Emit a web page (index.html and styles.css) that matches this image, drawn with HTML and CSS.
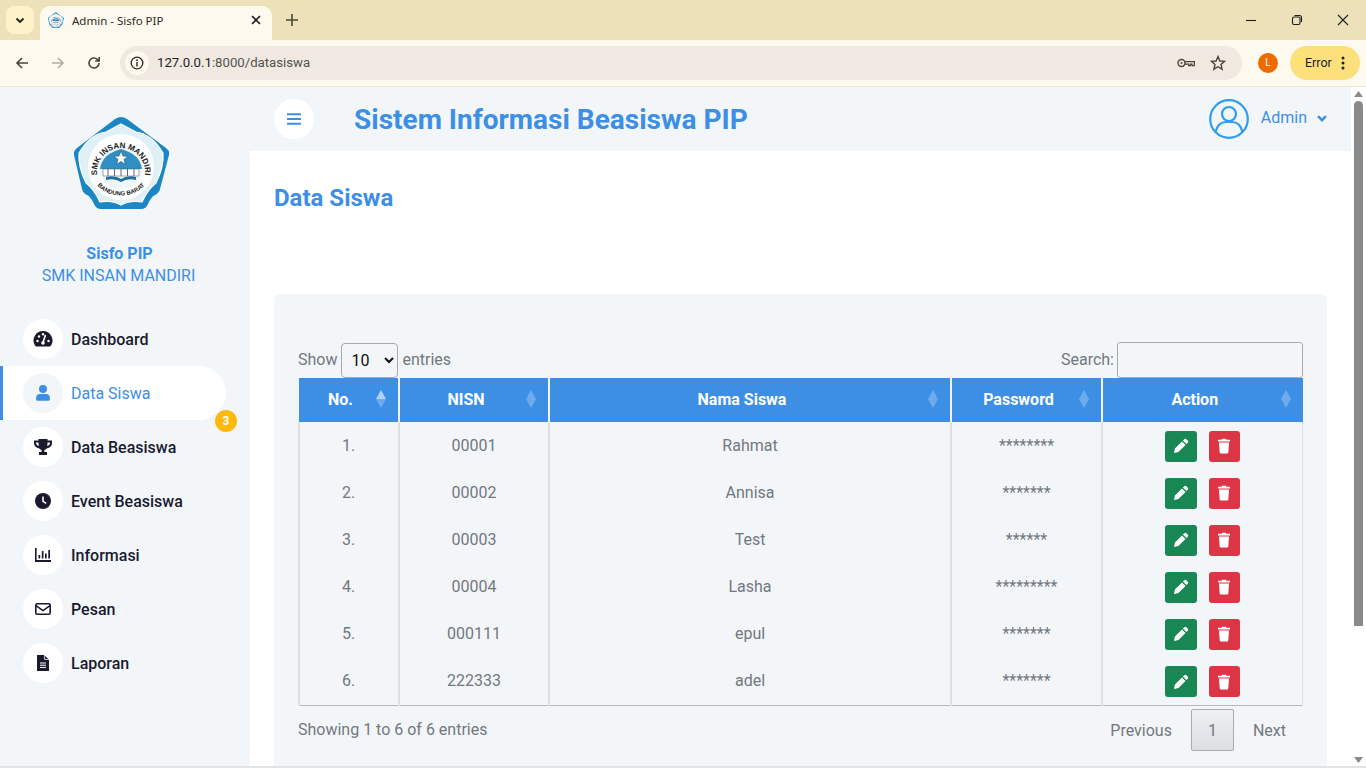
FILE: index.html
```html
<!DOCTYPE html>
<html lang="en">
<head>
    <meta charset="UTF-8">
    <title>Admin - Sisfo PIP</title>
    <link rel="stylesheet" href="styles.css">
</head>
<body>
    <svg class="defs" width="0" height="0">
        <defs>
            <symbol id="logo" viewBox="0 0 96 92">
                <path d="M47 0 Q50 0 53 2 L92 31 Q96 34 95 38 L86 72 Q85 76 81 78 Q77 80 74 87 Q72 92 67 92 H27 Q22 92 20 87 Q17 80 13 78 Q9 76 8 72 L0 38 Q-1 34 3 31 L41 2 Q44 0 47 0 Z" fill="#1b86c4"/>
                <path d="M47 7 L62 15 Q78 17 89 36 Q90 50 82 66 Q74 72 68 85 Q56 83 47 88 Q38 83 26 85 Q20 72 12 66 Q4 50 5 36 Q16 17 32 15 Z" fill="#dff0f6" stroke="#fff" stroke-width="1.2"/>
                <circle cx="47" cy="50" r="33" fill="#fff"/>
                <circle cx="47" cy="50" r="22" fill="#eef6f9"/>
                <path d="M26 52 Q28 37 47 32 Q66 37 68 52 Z" fill="#2f8fc4"/>
                <path d="M47 34 l2 5 5 .2 -4 3.2 1.4 5 -4.4 -2.9 -4.4 2.9 1.4 -5 -4 -3.2 5 -.2 Z" fill="#f4fafc" stroke="#27506e" stroke-width=".6"/>
                <path d="M29 52 h36 v7 h-36 Z" fill="#fff" stroke="#555" stroke-width=".5"/>
                <path d="M34 52 v7 M40.500 52 v7 M47 52 v7 M53.500 52 v7 M60 52 v7" stroke="#555" stroke-width=".9"/>
                <path d="M32 60 Q41 58 47 62 Q53 58 62 60 L62 63 Q53 61 47 65 Q41 61 32 63 Z" fill="#1f6f9f"/>
                <path id="arc-top" d="M23.8 61.200 A24 24 0 1 1 70.200 61.200" fill="none"/>
                <path id="arc-bot" d="M22 66 A27 20 0 0 0 72 66" fill="none"/>
                <text class="logo-text" font-size="8"><textPath href="#arc-top" startOffset="50%" text-anchor="middle">SMK INSAN MANDIRI</textPath></text>
                <text class="logo-text" font-size="6"><textPath href="#arc-bot" startOffset="50%" text-anchor="middle">BANDUNG BARAT</textPath></text>
            </symbol>
            <symbol id="pencil" viewBox="0 0 16 16">
                <path d="M11.3 1.2 a1.4 1.4 0 0 1 2 0 l1.5 1.5 a1.4 1.4 0 0 1 0 2 l-1.4 1.4 -3.5 -3.5 Z M9 3.5 l3.5 3.5 L5.4 14.1 1 15 l.9 -4.4 Z" fill="currentColor"/>
            </symbol>
            <symbol id="trash" viewBox="0 0 14 16">
                <path d="M1 1.8 h3.6 l.5 -1 h3.8 l.5 1 h3.6 v1.8 h-12 Z M2 4.6 h10 l-.7 10 a1.2 1.2 0 0 1 -1.2 1 h-6.2 a1.2 1.2 0 0 1 -1.2 -1 Z" fill="currentColor"/>
            </symbol>
        </defs>
    </svg>

    <!-- Browser window -->
    <div class="tabstrip">
        <div class="tab-search"><svg width="12" height="12" viewBox="0 0 12 12"><path d="M2.5 4.5 L6 8 L9.5 4.5" fill="none" stroke="#1f1f1f" stroke-width="1.8"/></svg></div>
        <div class="tab">
            <svg class="tab-logo" width="16" height="16"><use href="#logo"/></svg>
            <span class="tab-title">Admin - Sisfo PIP</span>
            <svg width="12" height="12" viewBox="0 0 12 12"><path d="M2 2 L10 10 M10 2 L2 10" stroke="#1f1f1f" stroke-width="1.6"/></svg>
        </div>
        <svg class="new-tab" width="12" height="12" viewBox="0 0 12 12"><path d="M6 0 V12 M0 6 H12" stroke="#4b4637" stroke-width="1.6"/></svg>
        <div class="window-btns">
            <svg width="12" height="12" viewBox="0 0 12 12"><path d="M1 6.5 H11" stroke="#1f1f1f" stroke-width="1.1"/></svg>
            <svg width="12" height="12" viewBox="0 0 12 12"><rect x="1.5" y="3" width="7.5" height="7.5" rx="1.5" fill="none" stroke="#1f1f1f" stroke-width="1.1"/><path d="M3.5 1.5 H8.5 Q10.5 1.5 10.5 3.5 V8" fill="none" stroke="#1f1f1f" stroke-width="1.1"/></svg>
            <svg width="12" height="12" viewBox="0 0 12 12"><path d="M1 1 L11 11 M11 1 L1 11" stroke="#1f1f1f" stroke-width="1.1"/></svg>
        </div>
    </div>
    <div class="toolbar">
        <svg class="nav-btn" width="14" height="14" viewBox="0 0 14 14"><path d="M13 7 H2 M7 2 L2 7 L7 12" fill="none" stroke="#4b4637" stroke-width="1.6"/></svg>
        <svg class="nav-btn" width="14" height="14" viewBox="0 0 14 14"><path d="M1 7 H12 M7 2 L12 7 L7 12" fill="none" stroke="#b3ae9f" stroke-width="1.6"/></svg>
        <svg class="nav-btn" width="14" height="14" viewBox="0 0 14 14"><path d="M12 7 A5 5 0 1 1 10.4 3.3 L12 5 M12.2 1 V5 H8.2" fill="none" stroke="#4b4637" stroke-width="1.6"/></svg>
        <div class="omnibox">
            <div class="site-info"><svg width="14" height="14" viewBox="0 0 14 14"><circle cx="7" cy="7" r="5.8" fill="none" stroke="#2b2a26" stroke-width="1.3"/><path d="M7 6 V10.4" stroke="#2b2a26" stroke-width="1.4"/><circle cx="7" cy="4.2" r=".9" fill="#2b2a26"/></svg></div>
            <span class="url"><span class="url-host">127.0.0.1</span>:8000/datasiswa</span>
            <svg class="omni-key" width="18" height="10" viewBox="0 0 18 10"><circle cx="4.5" cy="5" r="3.5" fill="none" stroke="#4b4637" stroke-width="1.4"/><circle cx="4.5" cy="5" r="1" fill="#4b4637"/><path d="M8 3.6 H17.4 V7.6 H15 V6.2 H13.4 V7.6 H11.6 V6.2 H8" fill="none" stroke="#4b4637" stroke-width="1.2"/></svg>
            <svg width="16" height="16" viewBox="0 0 16 16"><path d="M8 1.6 L9.9 6 L14.6 6.4 L11 9.5 L12.1 14.2 L8 11.7 L3.9 14.2 L5 9.5 L1.4 6.4 L6.1 6 Z" fill="none" stroke="#4b4637" stroke-width="1.4"/></svg>
        </div>
        <div class="profile">L</div>
        <div class="error-pill">Error<svg width="4" height="14" viewBox="0 0 4 14"><circle cx="2" cy="2" r="1.5" fill="#1f1f1f"/><circle cx="2" cy="7" r="1.5" fill="#1f1f1f"/><circle cx="2" cy="12" r="1.5" fill="#1f1f1f"/></svg></div>
    </div>

    <!-- Page -->
    <div class="viewport">
        <aside class="sidebar">
            <svg class="brand-logo" width="96" height="92"><use href="#logo"/></svg>
            <div class="brand-name">Sisfo PIP</div>
            <div class="brand-school">SMK INSAN MANDIRI</div>
            <ul class="side-menu">
                <li><span class="menu-icon"><svg width="20" height="18" viewBox="0 0 20 18"><path d="M10 1 A9.5 9.5 0 0 0 2 15.6 Q2.5 16.5 3.5 16.5 H16.5 Q17.5 16.5 18 15.6 A9.5 9.5 0 0 0 10 1 Z" fill="#1a1a2e"/><path d="M10 12.5 L12.5 5" stroke="#fff" stroke-width="1.6"/><circle cx="10" cy="13" r="1.8" fill="#fff"/><circle cx="4.5" cy="11" r="1.2" fill="#fff"/><circle cx="6" cy="6.5" r="1.2" fill="#fff"/><circle cx="10" cy="4.3" r="1.2" fill="#fff"/><circle cx="15.5" cy="11" r="1.2" fill="#fff"/></svg></span>Dashboard</li>
                <li class="active"><span class="menu-icon"><svg width="14" height="16" viewBox="0 0 14 16"><circle cx="7" cy="4" r="4" fill="#3d8fe6"/><path d="M0 14 Q0 9 4 9 H10 Q14 9 14 14 Q14 15.8 12.5 15.8 H1.5 Q0 15.8 0 14 Z" fill="#3d8fe6"/></svg></span>Data Siswa<span class="badge">3</span></li>
                <li><span class="menu-icon"><svg width="18" height="16" viewBox="0 0 18 16"><path d="M4.5 0 H13.5 V1.6 H18 V4 Q18 8.4 12.6 9.4 Q11.6 10.6 10.4 11 V13 H13 V16 H5 V13 H7.6 V11 Q6.4 10.6 5.4 9.4 Q0 8.4 0 4 V1.6 H4.5 Z M2 3.4 V4 Q2 6.3 4.9 7.1 Q4.5 5.4 4.5 3.4 Z M16 3.4 H13.5 Q13.5 5.4 13.1 7.1 Q16 6.3 16 4 Z" fill="#1a1a2e" fill-rule="evenodd"/></svg></span>Data Beasiswa</li>
                <li><span class="menu-icon"><svg width="16" height="16" viewBox="0 0 16 16"><circle cx="8" cy="8" r="8" fill="#1a1a2e"/><path d="M8 3.4 V8.4 L11.2 10.4" fill="none" stroke="#fff" stroke-width="1.6"/></svg></span>Event Beasiswa</li>
                <li><span class="menu-icon"><svg width="16" height="14" viewBox="0 0 16 14"><path d="M0 0 H1.6 V12 H16 V14 H0 Z M3.5 7 H5.2 V10.4 H3.5 Z M6.8 3 H8.5 V10.4 H6.8 Z M10 5.5 H11.7 V10.4 H10 Z M13.3 2 H15 V10.4 H13.3 Z" fill="#1a1a2e"/></svg></span>Informasi</li>
                <li><span class="menu-icon"><svg width="16" height="12" viewBox="0 0 16 12"><rect x=".8" y=".8" width="14.4" height="10.4" rx="1.4" fill="none" stroke="#1a1a2e" stroke-width="1.6"/><path d="M1 2.6 L8 7.6 L15 2.6" fill="none" stroke="#1a1a2e" stroke-width="1.6"/></svg></span>Pesan</li>
                <li><span class="menu-icon"><svg width="12" height="16" viewBox="0 0 12 16"><path d="M0 0 H7.2 L12 4.8 V16 H0 Z" fill="#1a1a2e"/><path d="M7.6 0 V4.4 H12" fill="none" stroke="#f3f6f9" stroke-width=".8"/><path d="M3 8 H9 M3 10.2 H9 M3 12.4 H9" stroke="#fff" stroke-width="1"/></svg></span>Laporan</li>
            </ul>
        </aside>

        <div class="main">
            <header class="topbar">
                <button class="menu-toggle"><svg width="14" height="12" viewBox="0 0 14 12"><path d="M0 1.2 H14 M0 6 H14 M0 10.8 H14" stroke="#3d8fe6" stroke-width="2.1"/></svg></button>
                <h1>Sistem Informasi Beasiswa PIP</h1>
                <div class="user">
                    <svg width="40" height="40" viewBox="0 0 40 40"><circle cx="20" cy="20" r="18.8" fill="none" stroke="#2f9cf0" stroke-width="2.2"/><circle cx="20" cy="15" r="7" fill="none" stroke="#2f9cf0" stroke-width="2.2"/><path d="M6.5 33 Q9 23 17 23 H23 Q31 23 33.5 33" fill="none" stroke="#2f9cf0" stroke-width="2.2"/></svg>
                    <span class="user-name">Admin</span>
                    <svg class="user-caret" width="10" height="7" viewBox="0 0 10 7"><path d="M1 1.2 L5 5.2 L9 1.2" fill="none" stroke="#3d8fe6" stroke-width="2.4"/></svg>
                </div>
            </header>

            <section class="content">
                <h2>Data Siswa</h2>
                <div class="card">
                    <div class="table-top">
                        <label><span>Show</span><select><option>10</option></select><span>entries</span></label>
                        <label><span>Search:</span><input type="text"></label>
                    </div>
                    <table>
                        <thead>
                            <tr>
                                <th class="col-no">No.<span class="sort sort-asc"></span></th>
                                <th class="col-nisn">NISN<span class="sort"></span></th>
                                <th class="col-nama">Nama Siswa<span class="sort"></span></th>
                                <th class="col-pass">Password<span class="sort"></span></th>
                                <th>Action<span class="sort"></span></th>
                            </tr>
                        </thead>
                        <tbody id="rows"></tbody>
                    </table>
                    <div class="table-bottom">
                        <span>Showing 1 to 6 of 6 entries</span>
                        <div class="pager">
                            <span>Previous</span>
                            <span class="page-current">1</span>
                            <span>Next</span>
                        </div>
                    </div>
                </div>
            </section>
        </div>

        <div class="scrollbar">
            <svg width="9" height="6" viewBox="0 0 9 6"><path d="M4.5 0 L9 6 H0 Z" fill="#8a8a8a"/></svg>
            <div class="scroll-thumb"></div>
            <svg class="scroll-down" width="9" height="6" viewBox="0 0 9 6"><path d="M0 0 H9 L4.5 6 Z" fill="#8a8a8a"/></svg>
        </div>
    </div>

    <script>
        // Sample students
        const siswa = [
            ['1.', '00001', 'Rahmat', '********'],
            ['2.', '00002', 'Annisa', '*******'],
            ['3.', '00003', 'Test', '******'],
            ['4.', '00004', 'Lasha', '*********'],
            ['5.', '000111', 'epul', '*******'],
            ['6.', '222333', 'adel', '*******']
        ];

        // Display rows
        const rows = document.getElementById('rows');
        siswa.forEach(s => {
            const tr = document.createElement('tr');
            tr.innerHTML = `
                <td class="cell-no">${s[0]}</td>
                <td>${s[1]}</td>
                <td>${s[2]}</td>
                <td>${s[3]}</td>
                <td class="actions">
                    <span class="btn btn-edit"><svg width="16" height="16"><use href="#pencil"/></svg></span>
                    <span class="btn btn-delete"><svg width="14" height="16"><use href="#trash"/></svg></span>
                </td>
            `;
            rows.appendChild(tr);
        });
    </script>
</body>
</html>
```

FILE: styles.css
```css
/* Basic CSS Styles */
* {
    box-sizing: border-box;
}
html, body {
    height: 768px;
    overflow: hidden;
}
body {
    font-family: Roboto, "Liberation Sans", sans-serif;
    margin: 0;
    padding: 0;
    background-color: #f3f6f9;
    display: flex;
    flex-direction: column;
}
.defs {
    position: absolute;
}
.logo-text {
    font-family: "Liberation Sans", sans-serif;
    font-weight: bold;
    fill: #222;
}

/* Browser window */
.tabstrip {
    height: 40px;
    flex: none;
    background-color: #ede1b9;
    display: flex;
    align-items: flex-end;
    padding-left: 6px;
}
.tab-search {
    width: 28px;
    height: 28px;
    margin-bottom: 6px;
    border-radius: 8px;
    background-color: #fdf2c9;
    display: flex;
    align-items: center;
    justify-content: center;
}
.tab {
    width: 232px;
    height: 34px;
    margin-left: 6px;
    padding: 0 10px 6px 8px;
    background-color: #fef9ee;
    border-radius: 10px 10px 0 0;
    display: flex;
    align-items: center;
    color: #2b2a26;
}
.tab-title {
    flex: 1;
    margin-left: 8px;
    font-family: "Noto Sans", sans-serif;
    font-size: 11.5px;
}
.new-tab {
    margin: 0 0 14px 14px;
}
.window-btns {
    margin-left: auto;
    align-self: center;
    display: flex;
    gap: 34px;
    padding-right: 17px;
}
.toolbar {
    height: 47px;
    flex: none;
    background-color: #fef9ee;
    border-bottom: 1px solid #f0e4d4;
    display: flex;
    align-items: center;
    padding: 0 6px 1px 15px;
}
.nav-btn {
    margin-right: 22px;
}
.omnibox {
    width: 1122px;
    height: 34px;
    margin-left: -3px;
    padding: 0 16px 0 5px;
    border-radius: 17px;
    background-color: #efe9e1;
    display: flex;
    align-items: center;
}
.site-info {
    width: 24px;
    height: 24px;
    border-radius: 50%;
    background-color: #fef9ee;
    display: flex;
    align-items: center;
    justify-content: center;
}
.url {
    flex: 1;
    margin-left: 8px;
    font-size: 13.2px;
    color: #55534f;
}
.url-host {
    color: #1f1f1f;
}
.omni-key {
    margin-right: 15px;
}
.profile {
    width: 20px;
    height: 20px;
    margin-left: 16px;
    border-radius: 50%;
    background-color: #ee6a00;
    color: #fff;
    font-size: 10px;
    text-align: center;
    line-height: 20px;
}
.error-pill {
    width: 70px;
    height: 34px;
    margin-left: 12px;
    border-radius: 17px;
    background-color: #fbe07c;
    font-size: 12.5px;
    color: #1f1f1f;
    display: flex;
    align-items: center;
    gap: 9px;
    padding-left: 15px;
}

/* Page */
.viewport {
    flex: 1;
    min-height: 0;
    display: flex;
    border-bottom: 2px solid #e3e3e3;
    overflow: hidden;
}
.sidebar {
    width: 250px;
    flex: none;
    padding-top: 30px;
    background-color: #f3f6f9;
}
.brand-logo {
    display: block;
    margin: 0 0 0 74px;
}
.brand-name {
    margin-top: 34px;
    text-align: center;
    font-size: 16px;
    font-weight: 700;
    color: #3d8fe6;
    line-height: 22px;
    padding-right: 11px;
}
.brand-school {
    text-align: center;
    font-size: 16px;
    color: #3d8fe6;
    line-height: 22px;
    padding-right: 13px;
}
.side-menu {
    list-style: none;
    margin: 25px 0 0;
    padding: 0;
}
.side-menu li {
    position: relative;
    width: 226px;
    height: 54px;
    padding-left: 23px;
    display: flex;
    align-items: center;
    gap: 8px;
    font-size: 16px;
    font-weight: 500;
    color: #1a1a2e;
}
.menu-icon {
    width: 40px;
    height: 40px;
    border-radius: 50%;
    background-color: #fff;
    display: flex;
    align-items: center;
    justify-content: center;
}
.side-menu li.active {
    background-color: #fff;
    border-left: 3px solid #3d8fe6;
    border-radius: 0 27px 27px 0;
    padding-left: 20px;
    color: #3d8fe6;
    font-weight: 400;
}
.active .menu-icon {
    background-color: #f3f6f9;
}
.badge {
    position: absolute;
    right: -11px;
    bottom: -12px;
    width: 22px;
    height: 22px;
    border-radius: 50%;
    background-color: #ffb80c;
    color: #fff;
    font-size: 12px;
    font-weight: 700;
    text-align: center;
    line-height: 22px;
}
.main {
    flex: 1;
    min-width: 0;
}
.topbar {
    height: 64px;
    background-color: #f3f6f9;
    display: flex;
    align-items: center;
    padding: 0 24px;
}
.menu-toggle {
    width: 40px;
    height: 40px;
    padding: 0;
    border: 0;
    border-radius: 50%;
    background-color: #fff;
    display: flex;
    align-items: center;
    justify-content: center;
}
.topbar h1 {
    margin: 0 0 0 40px;
    font-size: 28px;
    font-weight: 700;
    color: #3d8fe6;
}
.user {
    margin-left: auto;
    display: flex;
    align-items: center;
    gap: 12px;
    color: #3d8fe6;
    font-size: 16px;
}
.user-name {
    margin: 0 -2px 3px 0;
}
.user-caret {
    margin-bottom: 1px;
}
.content {
    background-color: #fff;
    height: 640px;
    padding: 32px 24px 0;
}
.content h2 {
    margin: 0;
    font-size: 24px;
    line-height: 30px;
    font-weight: 700;
    color: #3d8fe6;
}
.card {
    margin-top: 81px;
    padding: 48px 24px 0;
    height: 500px;
    background-color: #f3f6f9;
    border-radius: 6px;
    font-size: 16px;
    color: #72787f;
}
.table-top {
    display: flex;
    justify-content: space-between;
    align-items: center;
    height: 36px;
}
.table-top label {
    display: flex;
    align-items: center;
    gap: 3px;
}
.table-top span {
    margin-bottom: 2px;
}
.table-top select {
    width: 57px;
    height: 35px;
    margin: 0 1px;
    padding: 0 4px 0 5px;
    font-family: Roboto, sans-serif;
    font-size: 16px;
    color: #111;
    background-color: #f3f6f9;
    border: 1px solid #aaa;
    border-radius: 4px;
}
.table-top input {
    width: 186px;
    height: 36px;
    background-color: #f3f6f9;
    border: 1px solid #aaa;
    border-radius: 3px;
}
table {
    width: 100%;
    table-layout: fixed;
    border-collapse: collapse;
    border-bottom: 1px solid #b5b9bd;
}
th {
    position: relative;
    height: 44px;
    padding: 0 16px 2px 0;
    background-color: #3d8fe6;
    border-left: 2px solid #f3f6f9;
    color: #fff;
    font-weight: 700;
    font-size: 16px;
}
th:first-child {
    border-left: 0;
}
.col-no {
    width: 100px;
}
.col-nisn {
    width: 150px;
}
.col-nama {
    width: 402px;
}
.col-pass {
    width: 151px;
}
.sort::before,
.sort::after {
    content: "";
    position: absolute;
    right: 12px;
    border-left: 5px solid transparent;
    border-right: 5px solid transparent;
    opacity: .25;
}
.sort::before {
    top: 12px;
    border-bottom: 9px solid #fff;
}
.sort::after {
    top: 21px;
    border-top: 9px solid #fff;
}
.sort-asc::before {
    opacity: .6;
}
td {
    height: 47px;
    padding: 0;
    text-align: center;
    border-left: 2px solid #dde1e5;
}
td:last-child {
    border-right: 1px solid #dde1e5;
}
.cell-no {
    padding-right: 1px;
}
tbody tr:last-child td {
    height: 48px;
    padding-bottom: 1px;
}
.actions {
    padding: 1px 0 0;
}
tbody tr:last-child .actions {
    padding: 2px 0 0;
}
.btn {
    display: inline-flex;
    align-items: center;
    justify-content: center;
    width: 32px;
    height: 31px;
    border-radius: 3px;
    color: #fff;
    vertical-align: middle;
}
.btn-edit {
    background-color: #198754;
}
.btn-delete {
    width: 31px;
    margin-left: 8px;
    background-color: #dc3545;
}
.table-bottom {
    display: flex;
    justify-content: space-between;
    padding-top: 3px;
}
.table-bottom > span {
    margin-top: 11px;
}
.pager {
    display: flex;
    align-items: center;
    gap: 19px;
    padding-right: 17px;
}
.pager span {
    padding-top: 2px;
}
.pager .page-current {
    width: 43px;
    height: 42px;
    padding-top: 0;
    border: 1px solid #a9abad;
    border-radius: 2px;
    background: linear-gradient(#eef0f2, #dcdfe2);
    text-align: center;
    line-height: 41px;
}
.scrollbar {
    width: 15px;
    flex: none;
    background-color: #fff;
    display: flex;
    flex-direction: column;
    align-items: center;
    padding-top: 4px;
}
.scroll-thumb {
    width: 9px;
    height: 525px;
    margin-top: 4px;
    border-radius: 5px 5px 0 0;
    background-color: #8a8a8a;
}
.scroll-down {
    margin-top: auto;
    margin-bottom: 3px;
}
```
